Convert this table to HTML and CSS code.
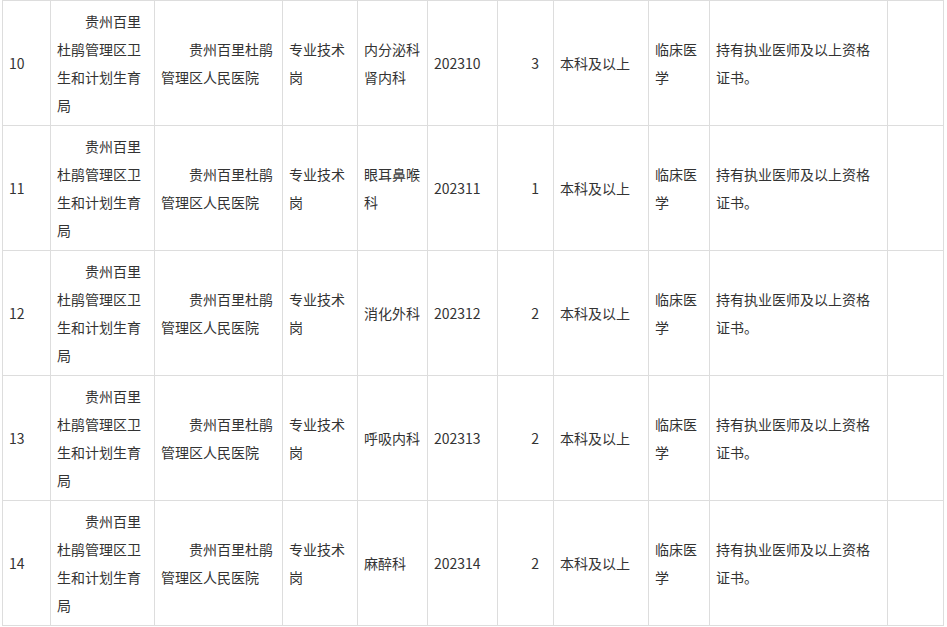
FILE: index.html
```html
<!DOCTYPE html>
<html lang="zh-CN">
<head>
<meta charset="utf-8">
<title>岗位表</title>
<link rel="stylesheet" href="styles.css">
</head>
<body>
<table class="jobs">
  <colgroup>
    <col class="c1"><col class="c2"><col class="c3"><col class="c4"><col class="c5"><col class="c6"><col class="c7"><col class="c8"><col class="c9"><col class="c10"><col class="c11">
  </colgroup>
  <tbody>
    <tr>
      <td>10</td>
      <td><p class="indent">贵州百里杜鹃管理区卫生和计划生育局</p></td>
      <td><p class="indent">贵州百里杜鹃管理区人民医院</p></td>
      <td>专业技术岗</td>
      <td>内分泌科肾内科</td>
      <td>202310</td>
      <td class="num">3</td>
      <td>本科及以上</td>
      <td>临床医学</td>
      <td>持有执业医师及以上资格证书。</td>
      <td></td>
    </tr>
    <tr>
      <td>11</td>
      <td><p class="indent">贵州百里杜鹃管理区卫生和计划生育局</p></td>
      <td><p class="indent">贵州百里杜鹃管理区人民医院</p></td>
      <td>专业技术岗</td>
      <td>眼耳鼻喉科</td>
      <td>202311</td>
      <td class="num">1</td>
      <td>本科及以上</td>
      <td>临床医学</td>
      <td>持有执业医师及以上资格证书。</td>
      <td></td>
    </tr>
    <tr>
      <td>12</td>
      <td><p class="indent">贵州百里杜鹃管理区卫生和计划生育局</p></td>
      <td><p class="indent">贵州百里杜鹃管理区人民医院</p></td>
      <td>专业技术岗</td>
      <td>消化外科</td>
      <td>202312</td>
      <td class="num">2</td>
      <td>本科及以上</td>
      <td>临床医学</td>
      <td>持有执业医师及以上资格证书。</td>
      <td></td>
    </tr>
    <tr>
      <td>13</td>
      <td><p class="indent">贵州百里杜鹃管理区卫生和计划生育局</p></td>
      <td><p class="indent">贵州百里杜鹃管理区人民医院</p></td>
      <td>专业技术岗</td>
      <td>呼吸内科</td>
      <td>202313</td>
      <td class="num">2</td>
      <td>本科及以上</td>
      <td>临床医学</td>
      <td>持有执业医师及以上资格证书。</td>
      <td></td>
    </tr>
    <tr>
      <td>14</td>
      <td><p class="indent">贵州百里杜鹃管理区卫生和计划生育局</p></td>
      <td><p class="indent">贵州百里杜鹃管理区人民医院</p></td>
      <td>专业技术岗</td>
      <td>麻醉科</td>
      <td>202314</td>
      <td class="num">2</td>
      <td>本科及以上</td>
      <td>临床医学</td>
      <td>持有执业医师及以上资格证书。</td>
      <td></td>
    </tr>
  </tbody>
</table>
</body>
</html>
```

FILE: styles.css
```css
html, body {
  margin: 0;
  padding: 0;
  background: #ffffff;
}

body {
  font-family: "Noto Sans CJK SC", "Microsoft YaHei", "Noto Sans", sans-serif;
  font-size: 14px;
  line-height: 28px;
  color: #333333;
}

.jobs {
  border-collapse: collapse;
  table-layout: fixed;
  width: 942px;
  margin-left: 2px;
}

.jobs td {
  border: 1px solid #dddddd;
  padding: 0 6px;
  height: 124px;
  vertical-align: middle;
  text-align: left;
  word-break: break-all;
}

.jobs td.num {
  text-align: right;
  padding-right: 14px;
}

.indent {
  margin: 0;
  text-indent: 28px;
}

.c1 { width: 48px; }
.c2 { width: 104px; }
.c3 { width: 128px; }
.c4 { width: 75px; }
.c5 { width: 70px; }
.c6 { width: 70px; }
.c7 { width: 56px; }
.c8 { width: 95px; }
.c9 { width: 61px; }
.c10 { width: 178px; }
.c11 { width: 56px; }
```
